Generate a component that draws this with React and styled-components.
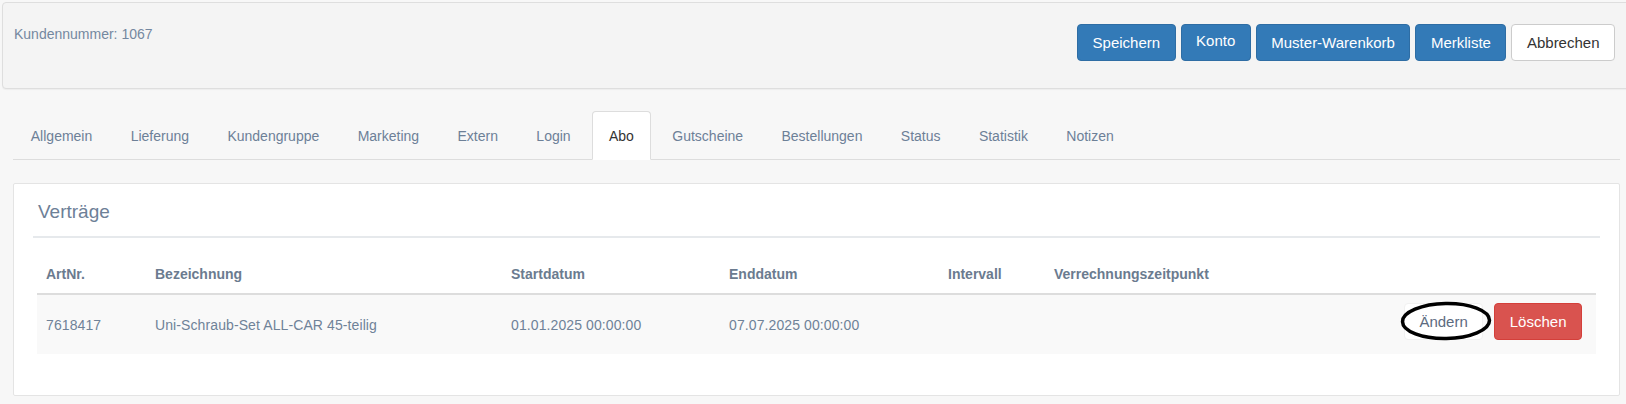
import React from "react";
import styled, { createGlobalStyle } from "styled-components";

const GlobalStyle = createGlobalStyle`
  html, body {
    margin: 0;
    padding: 0;
    background: #f7f7f7;
    font-family: "Liberation Sans", Arial, sans-serif;
    font-size: 14px;
    color: #333;
    overflow: hidden;
  }
  * {
    box-sizing: border-box;
  }
`;

const HeaderPanel = styled.div`
  display: flex;
  justify-content: space-between;
  align-items: flex-start;
  height: 87px;
  margin: 2px -12px 0 2px;
  padding: 21px 22px 0 11px;
  background: #f4f4f4;
  border: 1px solid #dedede;
  border-radius: 4px;
  box-shadow: 0 1px 1px rgba(0, 0, 0, 0.04);
`;

const CustomerNo = styled.div`
  line-height: 20px;
  color: #7488a0;
`;

const ButtonBar = styled.div`
  display: flex;
  gap: 5px;
`;

const palette = {
  primary: { bg: "#337ab7", border: "#2e6da4", color: "#fff" },
  default: { bg: "#fff", border: "#ccc", color: "#333" },
  danger: { bg: "#d9534f", border: "#d43f3a", color: "#fff" },
  plain: { bg: "#fff", border: "#f1f1f1", color: "#5c6b80" },
};

const Button = styled.button`
  position: relative;
  height: 37px;
  padding: ${(p) => (p.$lift ? "0 14.5px 4px" : "0 14.5px")};
  font-family: inherit;
  font-size: 15px;
  line-height: ${(p) => (p.$lift ? "31px" : "35px")};
  border-radius: 4px;
  border: 1px solid ${(p) => palette[p.$kind].border};
  background: ${(p) => palette[p.$kind].bg};
  color: ${(p) => palette[p.$kind].color};
  cursor: pointer;
  white-space: nowrap;
  vertical-align: middle;
`;

const Content = styled.div`
  padding: 0 6px 0 13px;
`;

const Tabs = styled.ul`
  display: flex;
  list-style: none;
  margin: 22px 0 0;
  padding: 0 0 0 0.6px;
  border-bottom: 1px solid #dddddd;
`;

const Tab = styled.li`
  margin: 0 4px -1px 0;
  padding: 14px 16.2px 13px;
  line-height: 20px;
  border: 1px solid ${(p) => (p.$active ? "#dddddd" : "transparent")};
  border-bottom-color: transparent;
  border-radius: 4px 4px 0 0;
  background: ${(p) => (p.$active ? "#fff" : "transparent")};
  color: ${(p) => (p.$active ? "#333" : "#6d8097")};
  cursor: pointer;
`;

const Card = styled.section`
  margin-top: 23px;
  padding: 0 19px 41px;
  background: #fff;
  border: 1px solid #e4e4e4;
  border-radius: 2px;
`;

const CardTitle = styled.h3`
  margin: 0;
  padding: 17px 5px 14px;
  font-size: 19px;
  font-weight: normal;
  line-height: 21px;
  color: #6d8097;
  border-bottom: 2px solid #e6e9ec;
`;

const Table = styled.table`
  width: calc(100% - 8px);
  margin: 17px 4px 0;
  border-collapse: collapse;
  table-layout: fixed;
`;

const Th = styled.th`
  padding: 9px;
  line-height: 20px;
  text-align: left;
  font-weight: bold;
  color: #6b7b8f;
  border-bottom: 2px solid #dddddd;
`;

const Row = styled.tr`
  background: ${(p) => (p.$striped ? "#f9f9f9" : "#fff")};
`;

const Td = styled.td`
  padding: ${(p) => (p.$actions ? "8px 14px 14px 9px" : "20px 9px 19px")};
  line-height: 20px;
  letter-spacing: 0.1px;
  text-align: ${(p) => (p.$actions ? "right" : "left")};
  color: #6f8298;
  vertical-align: middle;
  white-space: nowrap;
`;

const Actions = styled.div`
  display: inline-flex;
  gap: 11px;
  letter-spacing: 0;
`;

const Marked = styled.span`
  position: relative;
  display: inline-block;
`;

const Ring = styled.svg`
  position: absolute;
  left: -4px;
  top: -2px;
  width: 92px;
  height: 40px;
  overflow: visible;
  pointer-events: none;
`;

const tabs = [
  "Allgemein",
  "Lieferung",
  "Kundengruppe",
  "Marketing",
  "Extern",
  "Login",
  "Abo",
  "Gutscheine",
  "Bestellungen",
  "Status",
  "Statistik",
  "Notizen",
];

const columns = [
  { label: "ArtNr.", width: 109 },
  { label: "Bezeichnung", width: 356 },
  { label: "Startdatum", width: 218 },
  { label: "Enddatum", width: 219 },
  { label: "Intervall", width: 106 },
  { label: "Verrechnungszeitpunkt", width: 300 },
  { label: "", width: undefined },
];

const contracts = [
  {
    artNr: "7618417",
    name: "Uni-Schraub-Set ALL-CAR 45-teilig",
    start: "01.01.2025 00:00:00",
    end: "07.07.2025 00:00:00",
    interval: "",
    billing: "",
  },
];

export default function App() {
  return (
    <>
      <GlobalStyle />
      <HeaderPanel>
        <CustomerNo>Kundennummer: 1067</CustomerNo>
        <ButtonBar>
          <Button $kind="primary">Speichern</Button>
          <Button $kind="primary" $lift>
            Konto
          </Button>
          <Button $kind="primary">Muster-Warenkorb</Button>
          <Button $kind="primary">Merkliste</Button>
          <Button $kind="default">Abbrechen</Button>
        </ButtonBar>
      </HeaderPanel>

      <Content>
        <Tabs>
          {tabs.map((t) => (
            <Tab key={t} $active={t === "Abo"}>
              {t}
            </Tab>
          ))}
        </Tabs>

        <Card>
          <CardTitle>Verträge</CardTitle>
          <Table>
            <colgroup>
              {columns.map((c, i) => (
                <col key={i} style={c.width ? { width: c.width } : undefined} />
              ))}
            </colgroup>
            <thead>
              <tr>
                {columns.map((c, i) => (
                  <Th key={i}>{c.label}</Th>
                ))}
              </tr>
            </thead>
            <tbody>
              {contracts.map((c) => (
                <Row key={c.artNr} $striped>
                  <Td>{c.artNr}</Td>
                  <Td>{c.name}</Td>
                  <Td>{c.start}</Td>
                  <Td>{c.end}</Td>
                  <Td>{c.interval}</Td>
                  <Td>{c.billing}</Td>
                  <Td $actions>
                    <Actions>
                      <Marked>
                        <Button $kind="plain">Ändern</Button>
                        <Ring viewBox="0 0 92 40">
                          <ellipse
                            cx="46"
                            cy="20"
                            rx="43.5"
                            ry="17.5"
                            fill="none"
                            stroke="#000"
                            strokeWidth="3.5"
                            transform="rotate(-1 46 20)"
                          />
                        </Ring>
                      </Marked>
                      <Button $kind="danger">Löschen</Button>
                    </Actions>
                  </Td>
                </Row>
              ))}
            </tbody>
          </Table>
        </Card>
      </Content>
    </>
  );
}
